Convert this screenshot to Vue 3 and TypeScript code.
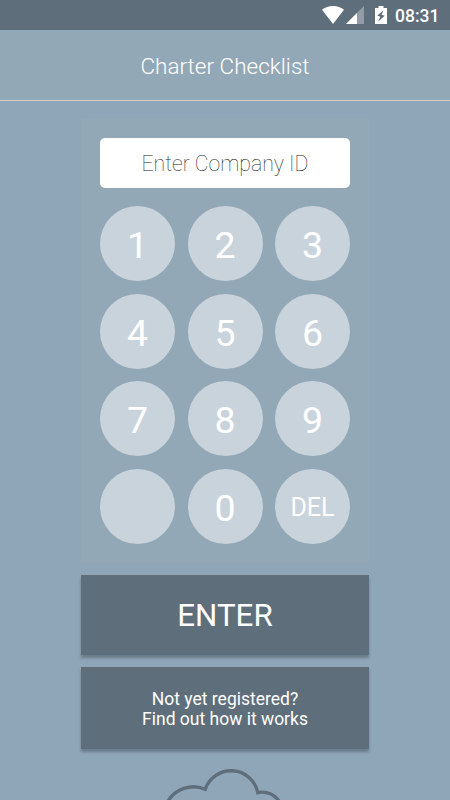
<script setup lang="ts">
import { ref } from 'vue'

const keys: string[] = ['1', '2', '3', '4', '5', '6', '7', '8', '9', '', '0', 'DEL']
const companyId = ref<string>('')

function press(key: string): void {
  if (key === 'DEL') {
    companyId.value = companyId.value.slice(0, -1)
  } else {
    companyId.value += key
  }
}
</script>

<template>
  <div class="screen">
    <div class="status">
      <svg class="wifi" viewBox="0 0 24 20" width="24" height="20">
        <path d="M1 4.8Q5.4 1 12 1t11 3.8L12 19z" fill="#fff" />
      </svg>
      <svg class="signal" viewBox="0 0 18 18" width="18" height="18">
        <path d="M18 0v18H0z" fill="#919ca6" />
        <path d="M11 7v11H0z" fill="#fff" />
      </svg>
      <svg class="battery" viewBox="0 0 12 18" width="12" height="18">
        <path d="M3.5 0h5v1.9H12V18H0V1.9h3.5z" fill="#fff" />
        <path d="M8.6 4.2 2.3 9.6l3 1.1-2.1 4.7 6.5-5.6-3.2-1z" fill="#5f6e7b" />
      </svg>
      <span class="clock">08:31</span>
    </div>
    <header class="header"><h1>Charter Checklist</h1></header>
    <main class="content">
      <section class="panel">
        <input v-model="companyId" class="company" type="text" placeholder="Enter Company ID" />
        <div class="keypad">
          <button
            v-for="key in keys"
            :key="key"
            class="key"
            :class="{ small: key === 'DEL' }"
            type="button"
            @click="press(key)"
          ><svg class="disc" viewBox="0 0 75 75"><circle cx="37.5" cy="37.5" r="37.5" fill="#c9d3dc" /></svg><span>{{ key }}</span></button>
        </div>
      </section>
      <button class="action enter" type="button">ENTER</button>
      <button class="action register" type="button">Not yet registered?<br />Find out how it works</button>
      <svg class="cloud" viewBox="160 764 130 46" width="130" height="46">
        <path
          d="M167.5 803A30 30 0 0 1 205.2 790.2A27.3 27.3 0 0 1 257.8 793.6A20 20 0 0 1 279.5 803"
          fill="none"
          stroke="#5f6e7b"
          stroke-width="3.4"
        />
      </svg>
    </main>
  </div>
</template>

<style>
body {
  margin: 0;
  background: #8fa5b8;
}
</style>

<style scoped>
.screen {
  display: flex;
  flex-direction: column;
  height: 800px;
  overflow: hidden;
  background: #8fa5b8;
  font-family: Roboto, sans-serif;
  color: #fff;
}
.status {
  display: flex;
  flex: none;
  align-items: center;
  justify-content: flex-end;
  box-sizing: border-box;
  height: 30px;
  padding-right: 10.5px;
  background: #5f6e7b;
}
.signal {
  margin-left: 1px;
}
.battery {
  margin-left: 10.5px;
}
.clock {
  margin-left: 8.5px;
  font-size: 17.5px;
  font-weight: 500;
  line-height: 30px;
  padding-top: 2px;
}
.header {
  flex: none;
  box-sizing: border-box;
  height: 71px;
  border-bottom: 1px solid #cfcfcd;
  background: #93a8b6;
}
h1 {
  margin: 0;
  padding-top: 1px;
  font-size: 22.5px;
  font-weight: 300;
  line-height: 70px;
  text-align: center;
}
.content {
  display: flex;
  flex: none;
  flex-direction: column;
  align-items: center;
  padding-top: 17.75px;
}
.panel {
  box-sizing: border-box;
  width: 287.5px;
  padding: 18.75px;
  background: #93a8b6;
}
.company {
  display: block;
  box-sizing: border-box;
  width: 250px;
  height: 50px;
  margin: 0 0 18.75px;
  padding: 1.5px 0 0;
  border: 0;
  border-radius: 5px;
  outline: 0;
  background: #fff;
  color: #222;
  font-family: inherit;
  font-size: 21.25px;
  font-weight: 100;
  text-align: center;
}
.company::placeholder {
  color: #222;
  opacity: 1;
}
.keypad {
  display: grid;
  grid-template-columns: repeat(3, 75px);
  gap: 12.5px;
}
button {
  border: 0;
  color: #fff;
  font-family: inherit;
  font-weight: 400;
}
.key {
  display: grid;
  place-items: center;
  height: 75px;
  padding: 0;
  background: none;
  font-size: 37.5px;
}
.disc,
.key span {
  grid-area: 1 / 1;
}
.disc {
  display: block;
  width: 75px;
  height: 75px;
}
.key span {
  z-index: 1;
  padding-top: 4px;
  line-height: 71px;
}
.key.small {
  font-size: 25px;
}
.key.small span {
  padding-top: 3px;
}
.action {
  width: 287.5px;
  background: #5f6e7b;
  box-shadow: 0 2.5px 2.5px rgba(60, 75, 85, 0.45);
}
.enter {
  height: 79.5px;
  margin-top: 12.5px;
  padding: 2px 0 0;
  font-size: 31.25px;
}
.register {
  height: 82px;
  margin-top: 12.5px;
  padding: 2px 0 0;
  font-size: 17.5px;
  line-height: 20.5px;
}
.cloud {
  margin-top: 13.5px;
}
</style>
